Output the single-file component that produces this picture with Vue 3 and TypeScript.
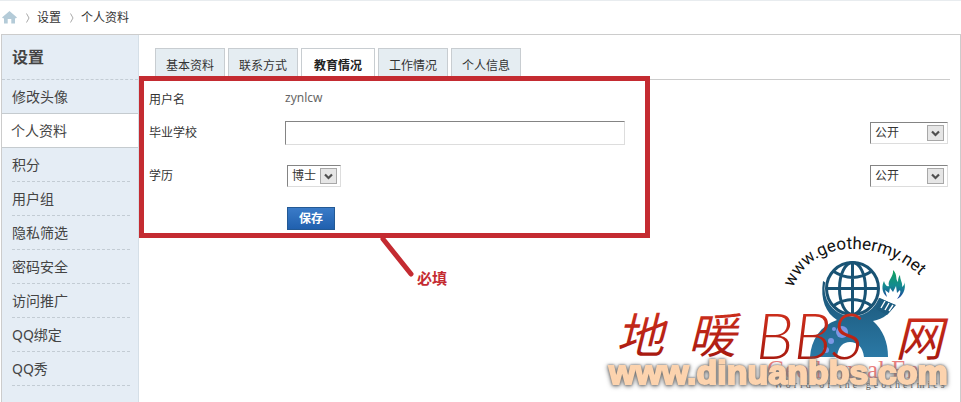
<script setup lang="ts">
import { ref } from 'vue'

const menu: string[] = ['修改头像', '个人资料', '积分', '用户组', '隐私筛选', '密码安全', '访问推广', 'QQ绑定', 'QQ秀']
const tabs: string[] = ['基本资料', '联系方式', '教育情况', '工作情况', '个人信息']
const activeMenu = ref('个人资料')
const activeTab = ref('教育情况')
const school = ref('')
const degree = ref('博士')
const schoolPrivacy = ref('公开')
const degreePrivacy = ref('公开')
const privacyOptions: string[] = ['公开', '好友可见', '保密']
const degrees: string[] = ['博士', '硕士', '本科', '专科']
</script>

<template>
  <div class="page">
    <nav class="crumbs">
      <a href="#" class="home" aria-label="首页">
        <svg width="15" height="13" viewBox="0 0 15 13"><path d="M7.5 0 L15 6.5 L13.6 7.4 L13 7 V12.5 H9.3 V8 H5.7 V12.5 H2 V7 L1.4 7.4 L0 6.5 Z" fill="#b4cbd8" /></svg>
      </a>
      <svg class="sep" width="4" height="10" viewBox="0 0 4 10"><path d="M.5 .5 L3 5 L.5 9.5" fill="none" stroke="#aaa" /></svg>
      <a href="#">设置</a>
      <svg class="sep" width="4" height="10" viewBox="0 0 4 10"><path d="M.5 .5 L3 5 L.5 9.5" fill="none" stroke="#aaa" /></svg>
      <a href="#">个人资料</a>
    </nav>

    <div class="frame">
      <aside class="side">
        <h2>设置</h2>
        <ul>
          <li v-for="m in menu" :key="m" :class="{ on: m === activeMenu }">
            <a href="#" @click.prevent="activeMenu = m">{{ m }}</a>
          </li>
        </ul>
      </aside>

      <main class="main">
        <div class="tabs">
          <button v-for="t in tabs" :key="t" type="button" :class="{ on: t === activeTab }" @click="activeTab = t">{{ t }}</button>
        </div>

        <form class="form" @submit.prevent>
          <div class="row first">
            <span class="name">用户名</span>
            <span class="value">zynlcw</span>
          </div>
          <div class="row">
            <label class="name" for="school">毕业学校</label>
            <input id="school" v-model="school" type="text" />
            <span class="pick privacy">
              <select v-model="schoolPrivacy" aria-label="毕业学校公开范围">
                <option v-for="o in privacyOptions" :key="o">{{ o }}</option>
              </select>
              <svg class="arrow" width="17" height="16" viewBox="0 0 17 16"><rect x=".5" y=".5" width="16" height="15" fill="#e6e6e6" stroke="#a8a8a8" /><path d="M5 6.5 L8.5 10 L12 6.5" fill="none" stroke="#505050" stroke-width="2.2" /></svg>
            </span>
          </div>
          <div class="row">
            <label class="name" for="degree">学历</label>
            <span class="pick degree">
              <select id="degree" v-model="degree">
                <option v-for="d in degrees" :key="d">{{ d }}</option>
              </select>
              <svg class="arrow" width="17" height="16" viewBox="0 0 17 16"><rect x=".5" y=".5" width="16" height="15" fill="#e6e6e6" stroke="#a8a8a8" /><path d="M5 6.5 L8.5 10 L12 6.5" fill="none" stroke="#505050" stroke-width="2.2" /></svg>
            </span>
            <span class="pick privacy">
              <select v-model="degreePrivacy" aria-label="学历公开范围">
                <option v-for="o in privacyOptions" :key="o">{{ o }}</option>
              </select>
              <svg class="arrow" width="17" height="16" viewBox="0 0 17 16"><rect x=".5" y=".5" width="16" height="15" fill="#e6e6e6" stroke="#a8a8a8" /><path d="M5 6.5 L8.5 10 L12 6.5" fill="none" stroke="#505050" stroke-width="2.2" /></svg>
            </span>
          </div>
          <div class="row">
            <button class="save" type="submit">保存</button>
          </div>
        </form>

        <!-- required-fields callout -->
        <div class="callout"></div>
        <svg class="pointer" width="40" height="46" viewBox="0 0 40 46"><path d="M6 4 L34 39" stroke="#c42b31" stroke-width="5" stroke-linecap="round" /></svg>
        <span class="note">必填</span>

        <!-- watermark -->
        <svg class="mark" width="361" height="172" viewBox="600 230 361 172">
          <defs>
            <path id="arc" d="M793 288 C804 260 828 249 852 249 C880 249 906 259 929 285" />
            <linearGradient id="flame" x1="0" y1="0" x2="0" y2="1">
              <stop offset="0" stop-color="#12a35c" />
              <stop offset=".55" stop-color="#148a91" />
              <stop offset="1" stop-color="#1c3f9d" />
            </linearGradient>
            <linearGradient id="body" x1="0" y1="0" x2="0" y2="1">
              <stop offset="0" stop-color="#195374" />
              <stop offset="1" stop-color="#2b79a5" />
            </linearGradient>
            <linearGradient id="red" x1="0" y1="0" x2="0" y2="1">
              <stop offset="0" stop-color="#d93520" />
              <stop offset="1" stop-color="#9e150c" />
            </linearGradient>
          </defs>
          <text class="arc-text"><textPath href="#arc">www.geothermy.net</textPath></text>
          <path d="M823 281 C820 300 826 313 837 320 C820 326 811 340 810 357 H837 C838 347 843 342 850 342 C857 342 863 347 864 357 H888 C888 342 883 330 873 321 C884 319 890 313 895 305 L880 298 L853 300 Z" fill="url(#body)" />
          <path d="M881 299 L896 305 L887 315 L876 309 Z" fill="#1d5c80" />
          <path d="M885 301 L881 308 M889 303 L885 310 M893 305 L889 311" stroke="#fff" stroke-width="1.4" />
          <circle cx="852.5" cy="288.5" r="28" fill="#fff" />
          <g fill="none" stroke="#195374" stroke-width="3">
            <circle cx="852.5" cy="288.5" r="26" />
            <ellipse cx="852.5" cy="288.5" rx="13" ry="26" />
            <path d="M852.5 263 V314 M827 288.5 H878 M833 271 Q852.5 284 872 271 M833 306 Q852.5 293 872 306" />
          </g>
          <path d="M887 297 C881 292 882 285 884 281 C885 285 887 287 889 286 C887 280 894 277 893 270 C898 275 895 279 898 282 C898 278 899 276 900 275 C900 280 903 283 902 287 C904 285 905 284 904 281 C907 289 902 297 897 299 C900 295 901 292 900 290 L897 293 L896 286 L893 292 L890 288 L889 293 L885 290 Z" fill="url(#flame)" />
          <g fill="#7b98e5">
            <circle cx="826" cy="350" r="3" />
            <circle cx="831" cy="341" r="3" />
            <circle cx="842" cy="332" r="6" />
            <circle cx="834" cy="329" r="2" />
          </g>
          <text class="geo" x="767" y="378">Geothermal En</text>
          <text class="world" x="774" y="388">World of the geothermics</text>
          <g class="brush">
            <text class="han" x="616" y="353">地</text>
            <text class="han" x="688" y="353">暖</text>
            <text class="latin" x="756" y="359">BBS</text>
            <text class="han" x="895" y="356">网</text>
          </g>
          <text class="site" x="609" y="384">www.dinuanbbs.com</text>
        </svg>
      </main>
    </div>
  </div>
</template>

<style>
body {
  margin: 0;
  background: #fff;
}
</style>

<style scoped>
.page {
  min-height: 100vh;
  box-sizing: border-box;
  display: flex;
  flex-direction: column;
  border-top: 1px solid #e8ecef;
  font: 12px/18px "Noto Sans", "Noto Sans CJK SC", sans-serif;
  color: #444;
  overflow: hidden;
}
a {
  color: inherit;
  text-decoration: none;
}
.crumbs {
  display: flex;
  align-items: center;
  height: 33px;
  padding-left: 2px;
  color: #333;
}
.home {
  display: flex;
}
.sep {
  margin: 0 7px 0 9px;
}
.frame {
  flex: 1;
  display: flex;
  margin-left: 1px;
  border: 1px solid #ccc;
  border-bottom: 0;
}
.side {
  flex: 0 0 136px;
  background: #e5edf5;
  border-right: 1px solid #d5dfe7;
}
h2 {
  margin: 0;
  height: 44px;
  padding-left: 10px;
  font-size: 16px;
  line-height: 44px;
  color: #444;
  border-bottom: 1px dashed #c3ccd4;
}
ul {
  list-style: none;
  margin: 0;
  padding: 0;
}
li {
  padding: 0 8px 0 10px;
  font-size: 14px;
  line-height: 33px;
}
li a {
  display: block;
  height: 33px;
  border-bottom: 1px dashed #c3ccd4;
}
li:first-child a {
  border-bottom: 0;
}
li.on {
  background: #fff;
  border: solid #c5cbcf;
  border-width: 1px 0;
  padding-left: 9px;
}
li.on a {
  border-bottom: 0;
}
.main {
  position: relative;
  flex: 1;
  min-width: 0;
  padding: 13px 10px 0 10px;
}
.tabs {
  display: flex;
  gap: 3px;
  padding-left: 6px;
  height: 31px;
  border-bottom: 1px solid #ccc;
}
.tabs button {
  padding: 4px 10px 0;
  border: 1px solid #c8cdd1;
  border-bottom: 0;
  background: #e5edf2;
  font: inherit;
  color: #333;
}
.tabs button.on {
  padding: 4px 12px 0;
  background: #fff;
  font-weight: 700;
  color: #222;
}
.form {
  display: flex;
  flex-direction: column;
}
.row {
  display: grid;
  grid-template-columns: 136px 1fr auto;
  align-items: center;
  height: 43px;
}
.row.first {
  height: 31px;
  align-items: end;
}
.first .name {
  padding-bottom: 2px;
}
.first .value {
  padding-bottom: 4px;
}
.name {
  color: #333;
}
.value {
  color: #666;
}
.row input {
  box-sizing: border-box;
  width: 340px;
  height: 24px;
  padding: 2px 4px;
  border: 1px solid;
  border-color: #848484 #ddd #ddd #848484;
  font: inherit;
}
.pick {
  display: flex;
  align-items: center;
  box-sizing: border-box;
  height: 22px;
  border: 1px solid;
  border-color: #848484 #ddd #ddd #848484;
  background: #fff;
}
.degree {
  width: 54px;
  margin-left: 2px;
}
.privacy {
  width: 78px;
  margin-right: 2px;
}
.pick select {
  appearance: none;
  box-sizing: border-box;
  width: 100%;
  height: 20px;
  margin-right: -20px;
  padding: 0 20px 0 4px;
  border: 0;
  background: transparent;
  color: #333;
  font: inherit;
}
.arrow {
  flex: none;
  pointer-events: none;
}
.save {
  grid-column: 2;
  justify-self: start;
  width: 48px;
  height: 23px;
  margin-left: 2px;
  padding: 0;
  border: 1px solid #235994;
  background: linear-gradient(#3a7bc8, #2060ae);
  color: #fff;
  font: inherit;
  font-weight: 700;
}
.callout {
  position: absolute;
  left: 0;
  top: 41px;
  width: 501px;
  height: 152px;
  border: 5px solid #c42b31;
  pointer-events: none;
}
.pointer {
  position: absolute;
  left: 238px;
  top: 200px;
}
.note {
  position: absolute;
  left: 278px;
  top: 234px;
  font-size: 15px;
  font-weight: 700;
  color: #c42b31;
}
.mark {
  position: absolute;
  right: -1px;
  bottom: 0;
  pointer-events: none;
}
.arc-text {
  font: 17px Roboto, sans-serif;
  fill: #111;
}
.geo {
  font: 25px "Liberation Serif", serif;
  fill: #ea7d7d;
}
.world {
  font: 10px "Liberation Serif", serif;
  letter-spacing: 3px;
  fill: #555;
}
.brush {
  fill: url(#red);
}
.han {
  font: italic 400 48px "Noto Sans CJK SC", sans-serif;
}
.latin {
  font: italic 300 64px Lato, sans-serif;
}
.site {
  font: 700 34px "Liberation Sans", sans-serif;
  fill: #fcd3ae;
  stroke: #fcd3ae;
  stroke-width: 2px;
  filter: drop-shadow(0 0 1px #777) drop-shadow(0 1px 2px #777);
}
</style>
